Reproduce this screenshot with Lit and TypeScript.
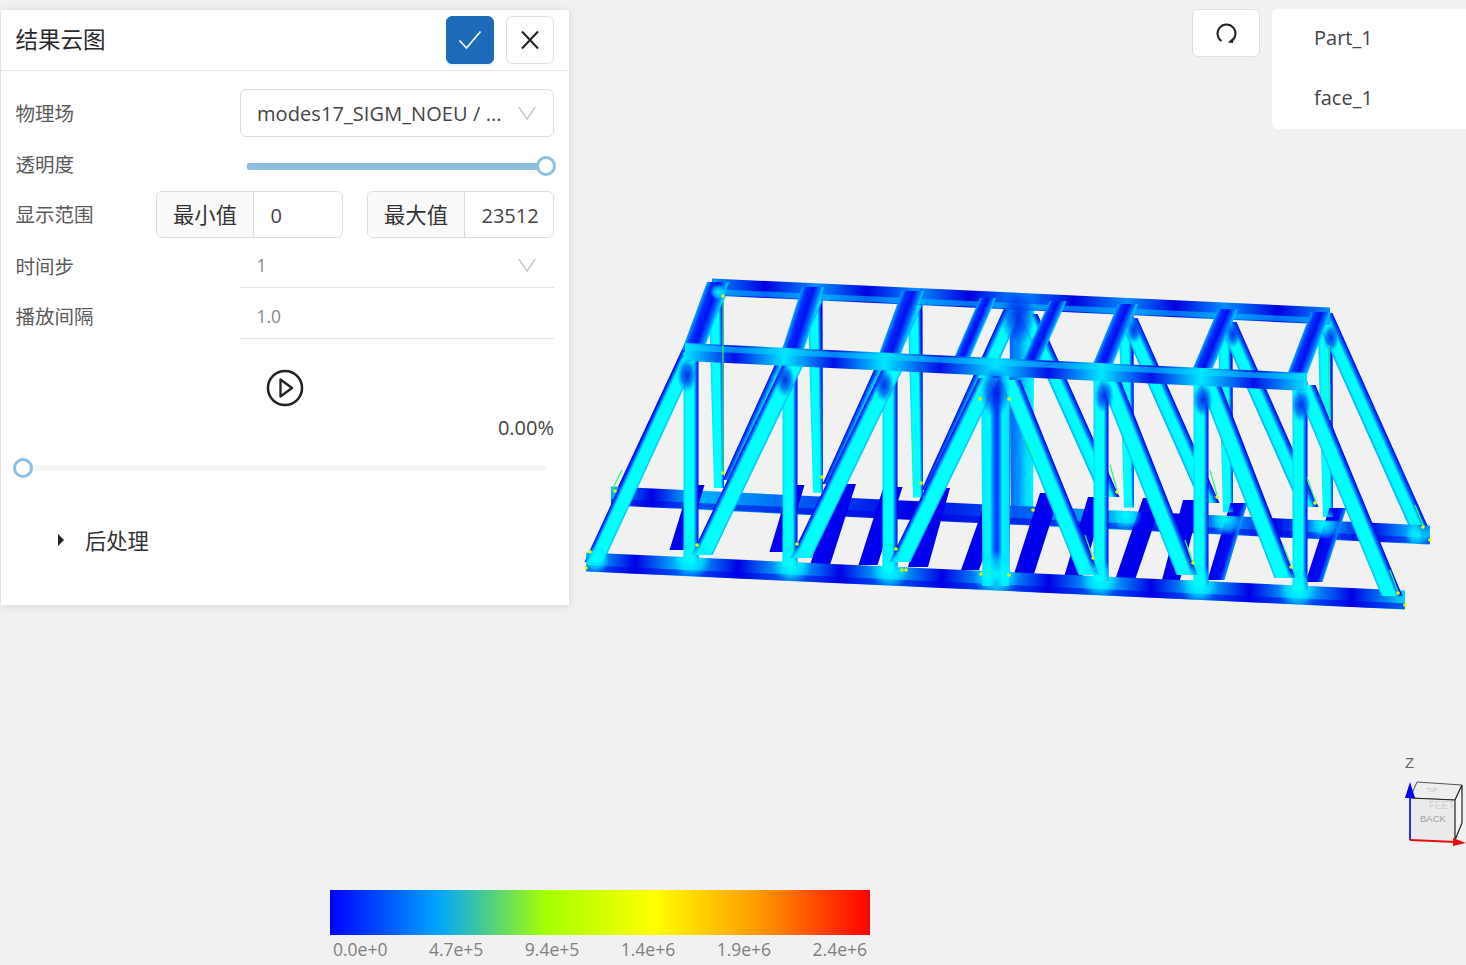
import { LitElement, html, css, svg } from "lit";
import { customElement } from "lit/decorators.js";

type P = [number, number];
type Stop = [number, string];
interface Beam { a: P; b: P; w: number; w2?: number; kind: string; }

const PROFILES: Record<string, Stop[]> = {
  dia: [[0, "#0000e8"], [0.08, "#0038ff"], [0.24, "#00e8ff"], [0.3, "#00ffff"], [0.88, "#00ffff"], [1, "#00b0ff"]],
  dib: [[0, "#00b0ff"], [0.12, "#00ffff"], [0.68, "#00ffff"], [0.86, "#0050ff"], [1, "#0000e0"]],
  bak: [[0, "#00a0ff"], [0.15, "#00f8ff"], [0.62, "#00ffff"], [0.82, "#0060ff"], [1, "#0008e8"]],
  bal: [[0, "#0008e8"], [0.16, "#0060ff"], [0.36, "#00f8ff"], [0.85, "#00ffff"], [1, "#00a0ff"]],
  vert: [[0, "#00ddff"], [0.18, "#00ffff"], [0.68, "#00ffff"], [0.86, "#0060ff"], [1, "#0000e8"]],
  cen: [[0, "#00e8ff"], [0.28, "#00f8ff"], [0.46, "#0050ff"], [0.56, "#0038ff"], [0.72, "#00f0ff"], [0.94, "#00e8ff"], [1, "#0060ff"]],
  cen2: [[0, "#0068ff"], [0.35, "#0090ff"], [0.7, "#00e0ff"], [1, "#00f8ff"]],
  strut: [[0, "#00a8ff"], [0.22, "#0030ff"], [0.55, "#0010f0"], [0.82, "#0070ff"], [1, "#00d8ff"]],
  solid: [[0, "#0000ee"], [1, "#0000ee"]],
  solidc: [[0, "#0000ee"], [0.7, "#0010f0"], [1, "#00a0ff"]],
};

const frontX = [691, 790, 890, 1101, 1201, 1300];
const backX = [716, 815, 915, 1126, 1225, 1325];
const frontBottom = (x: number) => 562 + (x - 586) * 0.0464;
const frontTop = (x: number) => 352 + (x - 685) * 0.0482;
const backBottom = (x: number) => 495 + (x - 611) * 0.0476;
const backTop = (x: number) => 287 + (x - 712) * 0.0469;

const SOLID: Beam[] = [
  { a: [697, 485], b: [677, 550], w: 15, kind: "solid" },
  { a: [797, 485], b: [777, 552], w: 15, kind: "solid" },
  { a: [846, 484], b: [820, 565], w: 20, kind: "solid" },
  { a: [893, 487], b: [868, 565], w: 19, kind: "solid" },
  { a: [940, 488], b: [918, 567], w: 20, kind: "solid" },
  { a: [995, 500], b: [970, 570], w: 18, kind: "solid" },
  { a: [1050, 493], b: [1023, 577], w: 20, kind: "solid" },
  { a: [1097, 497], b: [1073, 577], w: 18, kind: "solid" },
  { a: [1153, 498], b: [1125, 580], w: 20, kind: "solid" },
  { a: [1192, 500], b: [1171, 580], w: 18, kind: "solid" },
  { a: [1239, 503], b: [1216, 580], w: 17, kind: "solidc" },
  { a: [1338, 508], b: [1314, 582], w: 17, kind: "solidc" },
];

const BACK: Beam[] = [
  ...backX.map((x): Beam => ({ a: [x, backTop(x) + 3], b: [x + 3, backBottom(x) - 12], w: 15, w2: 10, kind: "vert" })),
  { a: [1022, 302], b: [1022, 522], w: 25, w2: 22, kind: "cen2" },
  { a: [722, 284], b: [625, 492], w: 19, kind: "bal" },
  { a: [816, 295], b: [732, 480], w: 19, kind: "bal" },
  { a: [915, 300], b: [832, 484], w: 19, kind: "bal" },
  { a: [1015, 305], b: [931, 490], w: 19, kind: "bal" },
  { a: [1028, 314], b: [1110, 497], w: 19, kind: "bak" },
  { a: [1128, 318], b: [1210, 503], w: 19, kind: "bak" },
  { a: [1227, 322], b: [1309, 507], w: 19, kind: "bak" },
  { a: [1323, 313], b: [1420, 530], w: 19, kind: "bak" },
];

const STRUTS: Beam[] = [
  { a: [718, 282], b: [693, 350], w: 22, kind: "strut" },
  { a: [813, 287], b: [793, 350], w: 22, kind: "strut" },
  { a: [913, 291], b: [890, 354], w: 22, kind: "strut" },
  { a: [988, 298], b: [962, 358], w: 16, kind: "strut" },
  { a: [1058, 301], b: [1031, 362], w: 17, kind: "strut" },
  { a: [1128, 304], b: [1103, 364], w: 20, kind: "strut" },
  { a: [1228, 309], b: [1203, 368], w: 20, kind: "strut" },
  { a: [1321, 312], b: [1297, 375], w: 20, kind: "strut" },
];

const FRONT: Beam[] = [
  ...frontX.map((x): Beam => ({ a: [x, frontTop(x)], b: [x, frontBottom(x) - 5], w: 15, kind: "vert" })),
  { a: [996, 372], b: [996, 586], w: 30, w2: 27, kind: "cen" },
  { a: [688, 358], b: [594, 562], w: 19, kind: "dia" },
  { a: [793, 365], b: [702, 555], w: 21, kind: "dia" },
  { a: [892, 370], b: [801, 558], w: 21, kind: "dia" },
  { a: [989, 378], b: [900, 562], w: 21, kind: "dia" },
  { a: [1010, 380], b: [1089, 575], w: 21, kind: "dib" },
  { a: [1110, 380], b: [1187, 575], w: 21, kind: "dib" },
  { a: [1210, 384], b: [1285, 578], w: 21, kind: "dib" },
  { a: [1305, 385], b: [1392, 596], w: 21, kind: "dib" },
];

const darkBlobs: [number, number, number][] = [
  [687, 375, 10], [785, 380, 10], [884, 385, 10], [995, 392, 15], [1104, 396, 10], [1203, 400, 10], [1301, 405, 10],
  [1018, 315, 18], [1134, 330, 8], [1233, 334, 8], [1331, 338, 8],
];
const cyanBlobs: [number, number, number][] = [
  [692, 559, 20], [792, 564, 20], [890, 569, 20], [996, 574, 24], [1100, 579, 20], [1199, 584, 20], [1298, 589, 20],
  [1126, 515, 16], [1227, 520, 16], [1325, 524, 16], [1418, 535, 14], [596, 560, 14], [718, 292, 8],
];
const hotDots: P[] = [
  [590, 552], [586, 568], [615, 491], [697, 545], [723, 473], [797, 544], [822, 477], [896, 549], [921, 483], [906, 570],
  [902, 570], [981, 574], [1009, 575], [1093, 558], [1117, 492], [1193, 563], [1217, 497], [1291, 567], [1315, 503],
  [1423, 527], [1398, 593], [1405, 605], [1033, 510], [1009, 399], [980, 399], [1430, 540], [723, 296],
];
const greens: [P, P][] = [
  [[723, 300], [723, 473]], [[1329, 345], [1330, 420]], [[1110, 465], [1117, 490]], [[1210, 470], [1217, 495]],
  [[1307, 477], [1316, 503]], [[1415, 505], [1424, 527]], [[1085, 535], [1093, 558]], [[1185, 540], [1193, 563]],
  [[1283, 545], [1291, 565]], [[1390, 570], [1398, 592]], [[612, 490], [622, 470]], [[1026, 440], [1034, 458]],
];

const CHORDS: { id: string; a: P; b: P; w: number }[] = [
  { id: "cb", a: [611, 496], b: [1430, 535], w: 19 },
  { id: "ct", a: [712, 287], b: [1330, 316], w: 17 },
  { id: "cf", a: [586, 562], b: [1405, 600], w: 19 },
  { id: "cm", a: [685, 352], b: [1307, 382], w: 18 },
];

function poly(b: Beam): string {
  const dx = b.b[0] - b.a[0], dy = b.b[1] - b.a[1];
  const w1 = b.w / 2, w2 = (b.w2 ?? b.w) / 2;
  const horiz = Math.abs(dy) >= Math.abs(dx);
  const ox = horiz ? 1 : 0, oy = horiz ? 0 : 1;
  const pts = [
    [b.a[0] - ox * w1, b.a[1] - oy * w1], [b.a[0] + ox * w1, b.a[1] + oy * w1],
    [b.b[0] + ox * w2, b.b[1] + oy * w2], [b.b[0] - ox * w2, b.b[1] - oy * w2],
  ];
  return pts.map((p) => p.map((v) => v.toFixed(1)).join(",")).join(" ");
}

function beams(list: Beam[], prefix: string) {
  const defs = list.map((b, i) => {
    const dx = b.b[0] - b.a[0], dy = b.b[1] - b.a[1];
    const l = Math.hypot(dx, dy) || 1;
    let nx = -dy / l, ny = dx / l;
    if (nx < 0) { nx = -nx; ny = -ny; }
    const mx = (b.a[0] + b.b[0]) / 2, my = (b.a[1] + b.b[1]) / 2;
    const h = ((b.w + (b.w2 ?? b.w)) / 4) * Math.abs(nx);
    return svg`<linearGradient id="${prefix}${i}" gradientUnits="userSpaceOnUse"
      x1="${mx - nx * h}" y1="${my - ny * h}" x2="${mx + nx * h}" y2="${my + ny * h}">
      ${PROFILES[b.kind].map(([o, c]) => svg`<stop offset="${o}" stop-color="${c}"></stop>`)}
    </linearGradient>`;
  });
  return svg`<defs>${defs}</defs>${list.map((b, i) => svg`<polygon points="${poly(b)}" fill="url(#${prefix}${i})"></polygon>`)}`;
}

function chord(idx: number, peak: string, low: string, joints: number[], band: string, bandAt: number) {
  const { id, a, b, w } = CHORDS[idx];
  const stops: Stop[] = [[0, peak]];
  joints.forEach((j, i) => {
    const prev = i === 0 ? 0 : joints[i - 1];
    stops.push([(prev + j) / 2, low], [j, peak]);
  });
  stops.push([(joints[joints.length - 1] + 1) / 2, low], [1, peak]);
  return svg`<defs><linearGradient id="${id}" gradientUnits="userSpaceOnUse" x1="${a[0]}" y1="${a[1]}" x2="${b[0]}" y2="${b[1]}">
    ${stops.map(([o, c]) => svg`<stop offset="${o}" stop-color="${c}"></stop>`)}
  </linearGradient></defs>
  <polygon points="${poly({ a, b, w, kind: "solid" })}" fill="url(#${id})"></polygon>
  <polygon points="${poly({ a: [a[0], a[1] + w * bandAt], b: [b[0], b[1] + w * bandAt], w: w * 0.32, kind: "solid" })}" fill="${band}" opacity="0.55"></polygon>`;
}

function truss() {
  const clipBeams = [...BACK, ...STRUTS, ...FRONT, ...CHORDS.map((c): Beam => ({ a: c.a, b: c.b, w: c.w, kind: "solid" }))];
  return svg`<svg class="truss" viewBox="0 0 1466 965" width="1466" height="965" aria-hidden="true">
    <defs>
      <radialGradient id="bd"><stop offset="0" stop-color="#0018e8" stop-opacity="0.9"></stop><stop offset="0.55" stop-color="#0030f0" stop-opacity="0.6"></stop><stop offset="1" stop-color="#0050ff" stop-opacity="0"></stop></radialGradient>
      <radialGradient id="bc"><stop offset="0" stop-color="#00ffff" stop-opacity="0.95"></stop><stop offset="0.6" stop-color="#00f0ff" stop-opacity="0.6"></stop><stop offset="1" stop-color="#00c0ff" stop-opacity="0"></stop></radialGradient>
      <clipPath id="solidArea">${clipBeams.map((b) => svg`<polygon points="${poly(b)}"></polygon>`)}</clipPath>
    </defs>
    ${beams(BACK, "k")}
    ${chord(0, "#00b8ff", "#0000e6", [0.1, 0.63, 0.75, 0.87, 0.98], "#0000e6", 0.3)}
    ${beams(SOLID, "s")}
    ${chord(1, "#0090ff", "#0000e0", [0.17, 0.33, 0.5, 0.67, 0.83], "#00c8ff", 0.28)}
    ${beams(STRUTS, "t")}
    ${chord(2, "#00d8ff", "#0000e6", [0.12, 0.25, 0.37, 0.5, 0.63, 0.75, 0.87], "#0000e6", 0.33)}
    ${beams(FRONT, "f")}
    ${chord(3, "#00e8ff", "#0010ea", [0.16, 0.32, 0.5, 0.67, 0.83], "#00e0ff", -0.25)}
    <g clip-path="url(#solidArea)">
      ${darkBlobs.map(([x, y, r]) => svg`<ellipse cx="${x}" cy="${y}" rx="${r}" ry="${r * 1.7}" fill="url(#bd)"></ellipse>`)}
      ${cyanBlobs.map(([x, y, r]) => svg`<circle cx="${x}" cy="${y}" r="${r}" fill="url(#bc)"></circle>`)}
    </g>
    ${greens.map(([a, b]) => svg`<line x1="${a[0]}" y1="${a[1]}" x2="${b[0]}" y2="${b[1]}" stroke="#20ff70" stroke-width="1.2"></line>`)}
    ${hotDots.map(([x, y]) => svg`<circle cx="${x}" cy="${y}" r="1.8" fill="#e6ff00"></circle>`)}
  </svg>`;
}

@customElement("gizmo-cube")
class GizmoCube extends LitElement {
  static styles = css`
    :host { display: block; width: 62px; height: 100px; }
    svg { display: block; }
    .z { font: 15px "Liberation Sans", sans-serif; fill: #666; }
    .b { font: 9.500px "Liberation Sans", sans-serif; fill: #a0a0a0; }
    .f { font: 10px "Liberation Sans", sans-serif; fill: #d0d0d0; }
    .t { font: 5px "Liberation Sans", sans-serif; fill: #c4c4c4; }
  `;
  render() {
    return html`<svg viewBox="0 0 62 100" width="62" height="100">
      <text class="z" x="1" y="14">Z</text>
      <polygon points="6,44 13,28 58,31 51,46" fill="#eeeeee" stroke="#555" stroke-width="1"></polygon>
      <polygon points="6,44 51,46 51,86 6,86" fill="#ebebeb"></polygon>
      <polygon points="51,46 58,31 58,69 51,86" fill="#f5f5f5"></polygon>
      <path d="M6 44 51 46M51 46 58 31M51 46V86L58 69V31" fill="none" stroke="#222" stroke-width="1.200"></path>
      <text class="t" x="23" y="38">TOP</text>
      <text class="f" x="25" y="55">FEET</text>
      <text class="b" x="16" y="68">BACK</text>
      <line x1="6" y1="86" x2="6" y2="42" stroke="#0000ee" stroke-width="1.600"></line>
      <polygon points="6,28 1,44 11,44" fill="#0000ee"></polygon>
      <line x1="6" y1="86" x2="52" y2="88" stroke="#e01010" stroke-width="1.800"></line>
      <polygon points="62,89 49,84 49,92" fill="#e81010"></polygon>
    </svg>`;
  }
}

@customElement("app-root")
class AppRoot extends LitElement {
  static styles = css`
    :host { display: block; position: relative; height: 100vh; min-height: 965px; overflow: hidden; background: #f1f1f1;
      font-family: "Open Sans", "Noto Sans CJK SC", sans-serif; color: #333; }
    .truss { position: absolute; left: 0; top: 0; }
    .panel { position: absolute; left: 1px; top: 10px; width: 568px; height: 595px; background: #fff;
      box-shadow: 0 1px 8px rgba(0,0,0,.12); box-sizing: border-box; }
    .head { height: 61px; box-sizing: border-box; border-bottom: 1px solid #e6e6e6; display: flex; align-items: center;
      padding: 0 15px; gap: 12px; }
    .title { flex: 1; font-size: 22.5px; color: #2a2a2a; padding-bottom: 4px; margin-left: -0.5px; }
    .btn { width: 48px; height: 48px; box-sizing: border-box; border-radius: 6px; display: flex; align-items: center; justify-content: center; background: #fff; border: 1px solid #e0e0e0; }
    .btn.ok { background: #1c6ab8; border-color: #1c6ab8; box-shadow: 0 2px 0 #eaf4fb; }
    .body { padding: 18px 15px 0; }
    .row { display: flex; align-items: center; }
    .label { font-size: 19.5px; color: #5a5a5a; white-space: nowrap; margin-left: -0.5px; padding-bottom: 2px; }
    .w-label { width: 224.5px; flex: none; }
    .r1 { height: 48px; }
    .r2 { height: 54px; }
    .r3 { height: 47px; justify-content: space-between; }
    .r4 { height: 50px; }
    .r5 { height: 51px; }
    .r4 .label, .r5 .label { padding: 4px 0 0; }
    .select { flex: 1; height: 48px; box-sizing: border-box; border: 1px solid #dcdcdc; border-radius: 6px; display: flex;
      align-items: center; justify-content: space-between; padding: 0 17px 0 16px; font-size: 20px; letter-spacing: .08px; color: #444; white-space: nowrap; }
    .slider { flex: 1; position: relative; height: 7px; margin: 5px 8px 0 7px; background: #8bbfe0; border-radius: 2px; }
    .knob { position: absolute; width: 20px; height: 20px; box-sizing: border-box; border-radius: 50%; border: 3px solid #8bc0e2; background: #fff; top: -7px; }
    .knob.end { right: -10px; }
    .knob.start { left: -10px; }
    .group { display: flex; height: 47px; box-sizing: border-box; border: 1px solid #dcdcdc; border-radius: 6px; overflow: hidden; font-size: 21.3px; width: 187px; }
    .addon { width: 96px; flex: none; background: #fafafa; border-right: 1px solid #dcdcdc; display: flex; align-items: center; justify-content: center; color: #333; padding-bottom: 2px; box-sizing: content-box; height: 43px; }
    .val { flex: 1; display: flex; align-items: center; padding: 2px 0 0 16.5px; font-size: 20px; color: #444; }
    .ranges { display: flex; gap: 24px; }
    .line { flex: 1; height: 100%; box-sizing: border-box; border-bottom: 1px solid #e3e3e3; display: flex; align-items: center;
      justify-content: space-between; padding: 4px 18px 0 16.5px; font-size: 17.5px; color: #8a8a8a; }
    .r5 .line { padding-top: 5px; }
    .play { height: 98px; position: relative; display: flex; justify-content: center; padding-top: 30px; box-sizing: border-box; }
    .pct { position: absolute; right: 0; top: 75px; font-size: 20px; color: #444; }
    .track { position: relative; height: 6px; margin: 28px 23px 0 22px; background: #f5f5f5; border-radius: 2px; }
    .post { display: flex; align-items: center; margin-top: 53px; padding-left: 56px; font-size: 21.3px; color: #333; gap: 20px; }
    .post svg { display: block; }
    .reset { position: absolute; left: 1192px; top: 9px; width: 68px; height: 48px; box-sizing: border-box; background: #fff;
      border: 1px solid #e0e0e0; border-radius: 6px; display: flex; align-items: center; justify-content: center; padding-top: 2px; }
    .tree { position: absolute; left: 1272px; top: 9px; right: 0; height: 120px; background: #fff; border-radius: 6px 0 0 6px; font-size: 20px; color: #444; }
    .tree div { height: 60px; box-sizing: border-box; display: flex; align-items: center; padding: 0 0 4px 42px; }
    .legend { position: absolute; left: 330px; top: 890px; width: 540px; }
    .bar { height: 45px; background: linear-gradient(90deg, #0000ff 0%, #00a4ff 20%, #a6ff00 40%, #ffff00 60%, #ff9600 80%, #ff0000 100%); }
    .ticks { display: flex; justify-content: space-between; padding: 2px 3px 0; font-size: 17.5px; color: #7f7f7f; line-height: 24px; }
    gizmo-cube { position: absolute; left: 1404px; top: 754px; }
  `;
  render() {
    return html`
      ${truss()}
      <div class="panel">
        <div class="head">
          <div class="title">结果云图</div>
          <div class="btn ok"><svg width="26" height="22" viewBox="0 0 26 22"><path d="M2.500 11.500 9.500 19 23.500 2.500" fill="none" stroke="#fff" stroke-width="1.700"/></svg></div>
          <div class="btn"><svg width="20" height="20" viewBox="0 0 20 20"><path d="M2 1.500 18 18.500M18 1.500 2 18.500" fill="none" stroke="#222" stroke-width="2"/></svg></div>
        </div>
        <div class="body">
          <div class="row r1"><div class="label w-label">物理场</div>
            <div class="select"><span>modes17_SIGM_NOEU / ...</span>${this.chev()}</div></div>
          <div class="row r2"><div class="label w-label">透明度</div>
            <div class="slider"><div class="knob end"></div></div></div>
          <div class="row r3"><div class="label">显示范围</div>
            <div class="ranges">
              <div class="group"><div class="addon">最小值</div><div class="val">0</div></div>
              <div class="group"><div class="addon">最大值</div><div class="val">23512</div></div>
            </div></div>
          <div class="row r4"><div class="label w-label">时间步</div><div class="line"><span>1</span>${this.chev()}</div></div>
          <div class="row r5"><div class="label w-label">播放间隔</div><div class="line"><span>1.0</span></div></div>
          <div class="play">
            <svg width="38" height="38" viewBox="0 0 38 38"><circle cx="19" cy="19" r="17" fill="none" stroke="#222" stroke-width="2.500"/><path d="M14.500 10.500 26 19 14.500 27.500Z" fill="none" stroke="#222" stroke-width="2.300" stroke-linejoin="round"/></svg>
            <div class="pct">0.00%</div>
          </div>
        </div>
        <div class="track"><div class="knob start"></div></div>
        <div class="post"><svg width="8" height="12" viewBox="0 0 8 12"><path d="M1 0 7 6 1 12Z" fill="#222"/></svg><span>后处理</span></div>
      </div>
      <div class="reset"><svg width="24" height="24" viewBox="0 0 24 24"><path d="M7.500 19A9 9 0 1 1 17.500 19" fill="none" stroke="#222" stroke-width="2"/><path d="M14 20.500 19 21 19 15.800Z" fill="#222"/></svg></div>
      <div class="tree"><div>Part_1</div><div>face_1</div></div>
      <div class="legend"><div class="bar"></div>
        <div class="ticks"><span>0.0e+0</span><span>4.7e+5</span><span>9.4e+5</span><span>1.4e+6</span><span>1.9e+6</span><span>2.4e+6</span></div></div>
      <gizmo-cube></gizmo-cube>
    `;
  }
  chev() {
    return html`<svg width="18" height="14" viewBox="0 0 18 14"><path d="M.8 1 9 13 17.200 1" fill="none" stroke="#bdbdbd" stroke-width="1.300"/></svg>`;
  }
}
